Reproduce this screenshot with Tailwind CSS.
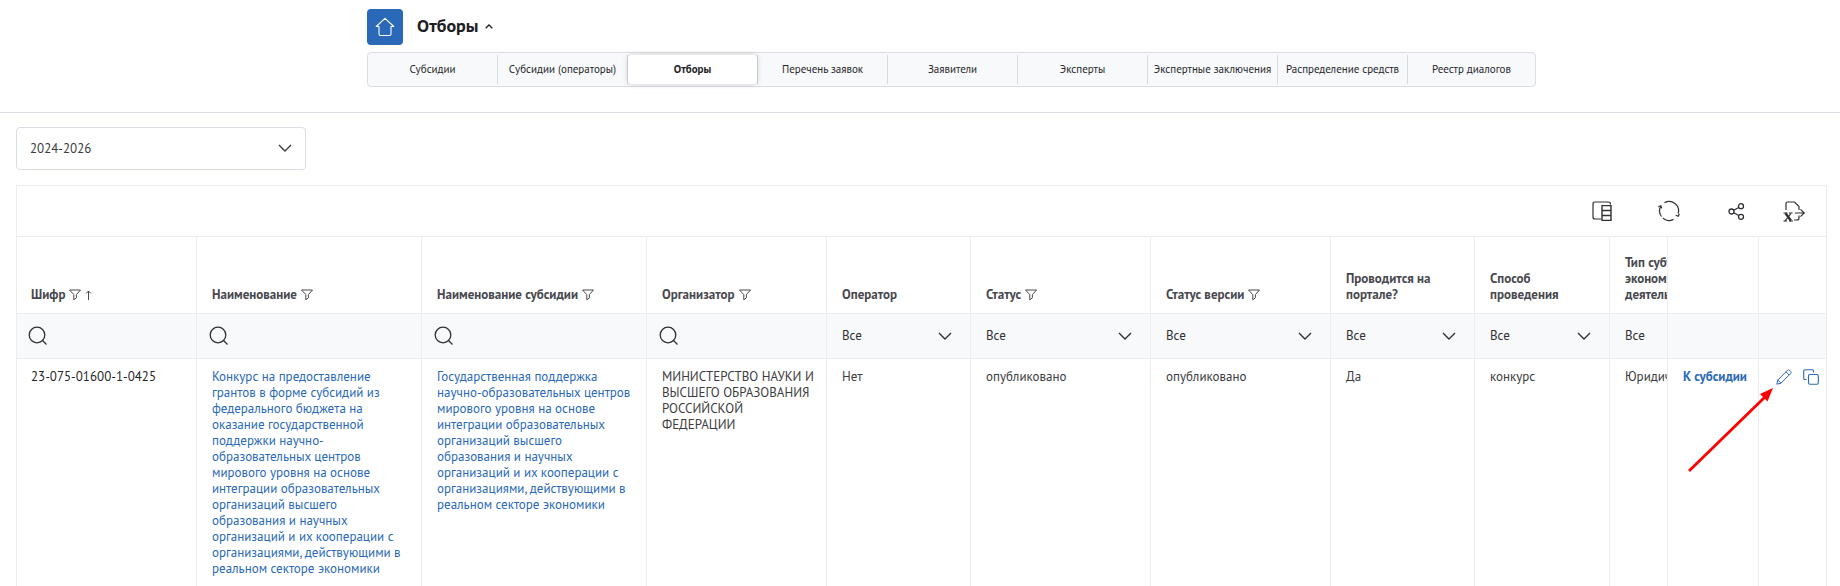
<!DOCTYPE html>
<html lang="ru">
<head>
<meta charset="utf-8">
<meta name="viewport" content="width=device-width, initial-scale=1">
<title>Отборы</title>
<script src="https://cdn.jsdelivr.net/npm/@tailwindcss/browser@4"></script>
</head>
<body class="bg-white font-['PT_Sans','Noto_Sans',sans-serif] text-[13px] leading-4 text-[#3c3c40]">
<svg class="hidden" aria-hidden="true">
  <symbol id="funnel" viewBox="0 0 12 12"><path d="M.5 1h11L7.4 5.6v3.2L4.8 10.8V5.6z" fill="none" stroke="currentColor" stroke-linejoin="round"/></symbol>
  <symbol id="chevron" viewBox="0 0 14 8"><path d="M1 1l6 6 6-6" fill="none" stroke="currentColor" stroke-width="1.4"/></symbol>
  <symbol id="search" viewBox="0 0 20 20"><g fill="none" stroke="currentColor" stroke-width="1.3"><circle cx="9" cy="9" r="7.8"/><path d="M14 14l4.5 4.5"/></g></symbol>
</svg>

<header class="border-b border-[#dcdce4] pt-[9px] pr-[304px] pb-[25px] pl-[367px]">
  <div class="flex items-center gap-[14px]">
    <a href="#" aria-label="Главная" class="flex size-9 items-center justify-center rounded bg-[#2a69b8] text-white">
      <svg class="size-5" viewBox="0 0 20 20" fill="none" stroke="currentColor" stroke-width="1.1" stroke-linejoin="round" stroke-linecap="round"><path d="M4 9.5H1.2L10 1.3l8.8 8.2H16V17q0 1.500-1.500 1.500h-9Q4 18.500 4 17z"/></svg>
    </a>
    <button type="button" aria-expanded="true" class="flex items-center gap-[7px] pb-[2px] text-lg leading-5 font-bold text-[#202024]">Отборы
      <svg class="h-[5px] w-2" viewBox="0 0 8 5" fill="none" stroke="currentColor" stroke-width="1.3"><path d="M.7 4.3L4 1l3.300 3.300"/></svg>
    </button>
  </div>
  <nav class="mt-[7px] grid h-[35px] grid-cols-[repeat(8,130fr)_127fr] rounded border border-[#dcdce4] bg-[#f8f9fb] py-[2px] text-[11px] text-[#26262a] *:min-w-0">
    <a href="#" class="flex items-center justify-center border-r border-[#d8dae2] pb-[2px] whitespace-nowrap">Субсидии</a>
    <a href="#" class="flex items-center justify-center border-r border-[#d8dae2] pb-[2px] whitespace-nowrap">Субсидии (операторы)</a>
    <div class="flex border-r border-[#d8dae2]"><a href="#" aria-current="page" class="flex flex-1 items-center justify-center rounded bg-white pb-[2px] font-bold whitespace-nowrap shadow-[0_0_6px_rgba(0,0,0,0.18)]">Отборы</a></div>
    <a href="#" class="flex items-center justify-center border-r border-[#d8dae2] pb-[2px] whitespace-nowrap">Перечень заявок</a>
    <a href="#" class="flex items-center justify-center border-r border-[#d8dae2] pb-[2px] whitespace-nowrap">Заявители</a>
    <a href="#" class="flex items-center justify-center border-r border-[#d8dae2] pb-[2px] whitespace-nowrap">Эксперты</a>
    <a href="#" class="flex items-center justify-center border-r border-[#d8dae2] pb-[2px] whitespace-nowrap">Экспертные заключения</a>
    <a href="#" class="flex items-center justify-center border-r border-[#d8dae2] pb-[2px] whitespace-nowrap">Распределение средств</a>
    <a href="#" class="flex items-center justify-center pb-[2px] whitespace-nowrap">Реестр диалогов</a>
  </nav>
</header>

<main class="relative pt-[14px] pr-[13px] pl-4">
  <div class="relative w-[290px]">
    <select aria-label="Период" class="block h-[43px] w-full appearance-none rounded border border-[#dcdce4] bg-white px-[13px]"><option>2024-2026</option></select>
    <svg class="pointer-events-none absolute top-[17px] right-[14px] h-2 w-[14px]"><use href="#chevron"/></svg>
  </div>

  <section class="mt-[15px] border-x border-t border-[#ededf1]">
    <div class="flex h-[51px] items-center justify-end border-b border-[#ededf1] pr-5 text-[#303034]">
      <button type="button" aria-label="Столбцы" class="mr-[46px]">
        <svg class="size-5" viewBox="0 0 20 20" fill="none" stroke="currentColor" stroke-width="1.2"><path d="M18.400 3.500V3q0-2-2-2H3Q1 1 1 3v13q0 2 2 2h6"/><path d="M10 4.600h9v14.800h-9zM10 9.500h9M10 14.500h9" stroke-width="1.4"/></svg>
      </button>
      <button type="button" aria-label="Обновить" class="mr-[48px]">
        <svg class="size-[22px]" viewBox="0 0 22 22" fill="none" stroke="currentColor" stroke-width="1.2"><path d="M6.500 2.600A9.500 9.500 0 0 1 20.200 13.500M15.500 19.400A9.500 9.500 0 0 1 5 18.300M3.500 16.500A9.500 9.500 0 0 1 2.600 6.500"/><path d="M.3 6.800l2.500-1 1 2.600M17.700 15.300l2.500 1 1.200-2.600"/></svg>
      </button>
      <button type="button" aria-label="Поделиться" class="mr-[38px]">
        <svg class="size-[17px]" viewBox="0 0 17 17" fill="none" stroke="currentColor" stroke-width="1.3"><circle cx="3.500" cy="8.500" r="2.500"/><circle cx="13" cy="3.200" r="2.500"/><circle cx="13" cy="13.800" r="2.500"/><path d="M5.700 7.300l5-2.800M5.700 9.700l5 2.800"/></svg>
      </button>
      <button type="button" aria-label="Экспорт в Excel">
        <svg class="h-[21px] w-[23px]" viewBox="0 0 23 21" fill="none" stroke="currentColor" stroke-width="1.2"><path d="M3 9V2.500Q3 1 4.500 1h7L16 5.500V9M16 14.500V17q0 2-2 2h-3"/><path d="M12 12h9M17.500 8.300l3.700 3.700-3.700 3.700"/><path d="M.5 12h4M6 12h3.500M.5 20h3.500M6 20h4"/><path d="M2.500 12.300l5.500 7.500" stroke-width="2.4"/><path d="M8 12.300L2 20"/></svg>
      </button>
    </div>

    <table class="w-full table-fixed border-separate border-spacing-0 text-left">
      <colgroup>
        <col class="w-[180px]"><col class="w-[225px]"><col class="w-[225px]"><col class="w-[180px]"><col class="w-[144px]"><col class="w-[180px]"><col class="w-[180px]"><col class="w-[144px]"><col class="w-[135px]"><col><col class="w-[91px]"><col class="w-[67px]">
      </colgroup>
      <thead class="text-[#48484e]">
        <tr class="h-[77px] align-bottom *:border-r *:border-b *:border-[#ededf1] *:pb-[10px] *:pl-[15px] *:first:pl-[14px] *:last:border-r-0">
          <th scope="col"><span class="flex items-center gap-1">Шифр <svg class="size-3"><use href="#funnel"/></svg><svg class="h-[10px] w-[7px]" viewBox="0 0 7 10" fill="none" stroke="currentColor"><path d="M3.500 10V1M1 3.500L3.500 1 6 3.500"/></svg></span></th>
          <th scope="col"><span class="flex items-center gap-1">Наименование <svg class="size-3"><use href="#funnel"/></svg></span></th>
          <th scope="col"><span class="flex items-center gap-1">Наименование субсидии <svg class="size-3"><use href="#funnel"/></svg></span></th>
          <th scope="col"><span class="flex items-center gap-1">Организатор <svg class="size-3"><use href="#funnel"/></svg></span></th>
          <th scope="col">Оператор</th>
          <th scope="col"><span class="flex items-center gap-1">Статус <svg class="size-3"><use href="#funnel"/></svg></span></th>
          <th scope="col"><span class="flex items-center gap-1">Статус версии <svg class="size-3"><use href="#funnel"/></svg></span></th>
          <th scope="col">Проводится на<br>портале?</th>
          <th scope="col">Способ<br>проведения</th>
          <th scope="col" class="overflow-hidden whitespace-nowrap">Тип субъекта<br>экономической<br>деятельности</th>
          <td></td>
          <td></td>
        </tr>
        <tr class="h-[45px] bg-[#f8f9fb] text-[#303034] *:border-r *:border-b *:border-[#ededf1] *:last:border-r-0">
          <td><label class="flex items-center pl-[11px]"><svg class="size-5 shrink-0"><use href="#search"/></svg><input type="text" aria-label="Поиск по шифру" class="w-full min-w-0 px-2 outline-none"></label></td>
          <td><label class="flex items-center pl-3"><svg class="size-5 shrink-0"><use href="#search"/></svg><input type="text" aria-label="Поиск по наименованию" class="w-full min-w-0 px-2 outline-none"></label></td>
          <td><label class="flex items-center pl-3"><svg class="size-5 shrink-0"><use href="#search"/></svg><input type="text" aria-label="Поиск по субсидии" class="w-full min-w-0 px-2 outline-none"></label></td>
          <td><label class="flex items-center pl-3"><svg class="size-5 shrink-0"><use href="#search"/></svg><input type="text" aria-label="Поиск по организатору" class="w-full min-w-0 px-2 outline-none"></label></td>
          <td><label class="grid items-center pr-[18px] pl-[15px]"><select aria-label="Оператор" class="col-start-1 row-start-1 w-full appearance-none"><option>Все</option></select><svg class="pointer-events-none col-start-1 row-start-1 h-2 w-[14px] justify-self-end"><use href="#chevron"/></svg></label></td>
          <td><label class="grid items-center pr-[18px] pl-[15px]"><select aria-label="Статус" class="col-start-1 row-start-1 w-full appearance-none"><option>Все</option></select><svg class="pointer-events-none col-start-1 row-start-1 h-2 w-[14px] justify-self-end"><use href="#chevron"/></svg></label></td>
          <td><label class="grid items-center pr-[18px] pl-[15px]"><select aria-label="Статус версии" class="col-start-1 row-start-1 w-full appearance-none"><option>Все</option></select><svg class="pointer-events-none col-start-1 row-start-1 h-2 w-[14px] justify-self-end"><use href="#chevron"/></svg></label></td>
          <td><label class="grid items-center pr-[18px] pl-[15px]"><select aria-label="Проводится на портале?" class="col-start-1 row-start-1 w-full appearance-none"><option>Все</option></select><svg class="pointer-events-none col-start-1 row-start-1 h-2 w-[14px] justify-self-end"><use href="#chevron"/></svg></label></td>
          <td><label class="grid items-center pr-[18px] pl-[15px]"><select aria-label="Способ проведения" class="col-start-1 row-start-1 w-full appearance-none"><option>Все</option></select><svg class="pointer-events-none col-start-1 row-start-1 h-2 w-[14px] justify-self-end"><use href="#chevron"/></svg></label></td>
          <td class="pl-[15px]"><select aria-label="Тип субъекта" class="block w-full appearance-none"><option>Все</option></select></td>
          <td></td>
          <td></td>
        </tr>
      </thead>
      <tbody>
        <tr class="align-top *:border-r *:border-[#ededf1] *:pt-[10px] *:pb-[9px] *:pl-[15px] *:first:pl-[14px] *:last:border-r-0">
          <td class="text-[#26262a]">23-075-01600-1-0425</td>
          <td class="whitespace-nowrap"><a href="#" class="text-[#2a69b8]">Конкурс на предоставление<br>грантов в форме субсидий из<br>федерального бюджета на<br>оказание государственной<br>поддержки научно-<br>образовательных центров<br>мирового уровня на основе<br>интеграции образовательных<br>организаций высшего<br>образования и научных<br>организаций и их кооперации с<br>организациями, действующими в<br>реальном секторе экономики</a></td>
          <td class="whitespace-nowrap"><a href="#" class="text-[#2a69b8]">Государственная поддержка<br>научно-образовательных центров<br>мирового уровня на основе<br>интеграции образовательных<br>организаций высшего<br>образования и научных<br>организаций и их кооперации с<br>организациями, действующими в<br>реальном секторе экономики</a></td>
          <td class="whitespace-nowrap">МИНИСТЕРСТВО НАУКИ И<br>ВЫСШЕГО ОБРАЗОВАНИЯ<br>РОССИЙСКОЙ<br>ФЕДЕРАЦИИ</td>
          <td>Нет</td>
          <td>опубликовано</td>
          <td>опубликовано</td>
          <td>Да</td>
          <td>конкурс</td>
          <td class="overflow-hidden whitespace-nowrap">Юридическое лицо</td>
          <td class="whitespace-nowrap"><a href="#" class="font-bold text-[#2a69b8]">К субсидии</a></td>
          <td>
            <div class="flex gap-[11px] pl-[2px] text-[#2a69b8]">
              <button type="button" aria-label="Редактировать"><svg class="size-4" viewBox="0 0 16 16" fill="none" stroke="currentColor" stroke-linejoin="round"><path d="M.8 15.200l1-4.200L11.500 1.300q1-1 2.200.1l.9.9q1.100 1.200.1 2.200L5 14.200zM1.800 11L5 14.200M10 2.800L13.200 6"/></svg></button>
              <button type="button" aria-label="Копировать"><svg class="size-4" viewBox="0 0 16 16" fill="none" stroke="currentColor" stroke-width="1.1"><rect x="5.500" y="5.500" width="9.800" height="9.800" rx="1.500"/><path d="M3.500 10.500H2Q.7 10.500.7 9.200V2Q.7.700 2 .7h7.200q1.300 0 1.300 1.300v1.500"/></svg></button>
            </div>
          </td>
        </tr>
      </tbody>
    </table>
  </section>

  <svg class="pointer-events-none absolute top-[275px] right-[66px] h-[86px] w-[87px]" viewBox="0 0 87 86" aria-hidden="true"><path d="M2 83L78 9" stroke="#f00" stroke-width="2.8"/><path d="M86 0L73 6l7.500 7.500z" fill="#f00"/></svg>
</main>
</body>
</html>
